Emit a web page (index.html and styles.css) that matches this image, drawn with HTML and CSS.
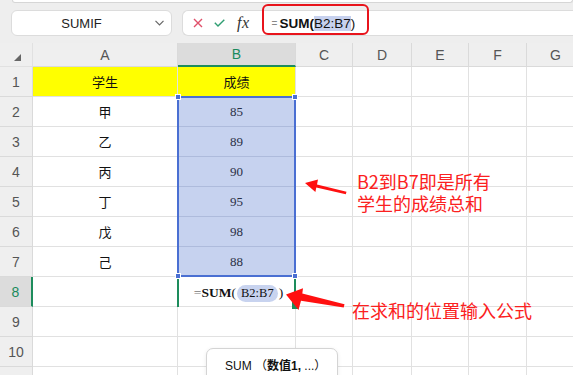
FILE: index.html
```html
<!DOCTYPE html>
<html lang="zh">
<head>
<meta charset="utf-8">
<link rel="stylesheet" href="styles.css">
</head>
<body>
<div class="page">
  <div class="toolbar">
    <div class="top-edge"></div>
    <div class="bar-row">
      <div class="namebox">
        <span class="name">SUMIF</span>
        <svg class="chev" width="9" height="6" viewBox="0 0 9 6"><polyline points="0.5,0.8 4.5,4.8 8.5,0.8" fill="none" stroke="#666" stroke-width="1.2"/></svg>
      </div>
      <div class="formulabar">
        <svg class="ico" width="10" height="10" viewBox="0 0 10 10"><path d="M1 1 L9 9 M9 1 L1 9" stroke="#e0506a" stroke-width="1.4" fill="none"/></svg>
        <svg class="ico ok" width="11" height="8" viewBox="0 0 11 8"><polyline points="0.8,3.8 4,7 10.3,0.7" stroke="#2f9e72" stroke-width="1.4" fill="none"/></svg>
        <span class="fx">fx</span>
        <div class="formula"><span class="eq">=</span><b>SUM(</b><span class="ref">B2:B7</span>)</div>
        <div class="redbox"></div>
      </div>
    </div>
  </div>

  <div class="sheet">
    <div class="corner"><svg width="8" height="8" viewBox="0 0 8 8"><polygon points="7,0 7,7 0,7" fill="#666"/></svg></div>
    <div class="ch">A</div><div class="ch ch-on">B</div><div class="ch">C</div><div class="ch">D</div><div class="ch">E</div><div class="ch">F</div><div class="ch">G</div>

    <div class="rh">1</div><div class="c hl">学生</div><div class="c hl">成绩</div><div class="c"></div><div class="c"></div><div class="c"></div><div class="c"></div><div class="c"></div>
    <div class="rh">2</div><div class="c">甲</div><div class="c sel">85</div><div class="c"></div><div class="c"></div><div class="c"></div><div class="c"></div><div class="c"></div>
    <div class="rh">3</div><div class="c">乙</div><div class="c sel">89</div><div class="c"></div><div class="c"></div><div class="c"></div><div class="c"></div><div class="c"></div>
    <div class="rh">4</div><div class="c">丙</div><div class="c sel">90</div><div class="c"></div><div class="c"></div><div class="c"></div><div class="c"></div><div class="c"></div>
    <div class="rh">5</div><div class="c">丁</div><div class="c sel">95</div><div class="c"></div><div class="c"></div><div class="c"></div><div class="c"></div><div class="c"></div>
    <div class="rh">6</div><div class="c">戊</div><div class="c sel">98</div><div class="c"></div><div class="c"></div><div class="c"></div><div class="c"></div><div class="c"></div>
    <div class="rh">7</div><div class="c">己</div><div class="c sel last">88</div><div class="c"></div><div class="c"></div><div class="c"></div><div class="c"></div><div class="c"></div>
    <div class="rh rh-on">8</div><div class="c"></div><div class="c active"><span class="f2"><span class="eq2">=</span><b>SUM</b>(<span class="pill">B2:B7</span>)</span><span class="fill-handle"></span></div><div class="c"></div><div class="c"></div><div class="c"></div><div class="c"></div><div class="c"></div>
    <div class="rh">9</div><div class="c"></div><div class="c"></div><div class="c"></div><div class="c"></div><div class="c"></div><div class="c"></div><div class="c"></div>
    <div class="rh">10</div><div class="c"></div><div class="c"></div><div class="c"></div><div class="c"></div><div class="c"></div><div class="c"></div><div class="c"></div>
    <div class="rh"></div><div class="c"></div><div class="c"></div><div class="c"></div><div class="c"></div><div class="c"></div><div class="c"></div><div class="c"></div>
  </div>

  <div class="selection">
    <span class="hd tl"></span><span class="hd tr"></span><span class="hd bl"></span><span class="hd br"></span>
  </div>

  <svg class="arrows" width="573" height="375" viewBox="0 0 573 375">
    <polygon points="305,183 318,179.5 317,184.5 346.5,191.8 345.8,194.2 316.3,187.6 315.4,192" fill="#ff1010"/>
    <polygon points="286,294.5 303,288.2 302.3,293.6 344.5,304.3 343.7,307.6 301,300.8 298.5,310" fill="#ff1010"/>
  </svg>

  <div class="note note1">B2到B7即是所有<br>学生的成绩总和</div>
  <div class="note note2">在求和的位置输入公式</div>

  <div class="tip">SUM （<b>数值1,</b> ...）</div>
</div>
</body>
</html>
```

FILE: styles.css
```css
html, body {
  margin: 0;
  background: #fff;
}

body {
  font-family: "Liberation Sans", "Noto Sans CJK SC", sans-serif;
  color: #1a1a1a;
}

.page {
  position: relative;
  width: 573px;
  height: 375px;
  overflow: hidden;
}

/* ---------- toolbar ---------- */
.toolbar {
  height: 43px;
  background: #eeeeee;
  box-sizing: border-box;
}

.top-edge {
  height: 2px;
  margin-left: 12px;
  background: #fff;
  border: 1px solid #d6d6d6;
  border-top: none;
  border-radius: 0 0 4px 4px;
}

.bar-row {
  display: flex;
  gap: 10px;
  padding: 7px 0 0 11px;
}

.namebox {
  width: 161px;
  height: 26px;
  box-sizing: border-box;
  background: #fff;
  border: 1px solid #dcdcdc;
  border-radius: 6px;
  display: flex;
  align-items: center;
  padding-right: 7px;
}

.name {
  flex: 1;
  text-align: center;
  font-size: 13px;
  color: #222;
  padding-right: 4px;
}

.chev {
  display: block;
}

.formulabar {
  position: relative;
  flex: 1;
  height: 26px;
  box-sizing: border-box;
  background: #fff;
  border: 1px solid #dcdcdc;
  border-right: none;
  border-radius: 6px 0 0 6px;
  display: flex;
  align-items: center;
  padding-left: 10px;
}

.ico {
  display: block;
}

.ok {
  margin-left: 11px;
}

.fx {
  margin-left: 12px;
  font-family: "Liberation Serif", serif;
  font-style: italic;
  font-size: 16px;
  color: #333;
  letter-spacing: 0.5px;
}

.formula {
  margin-left: 22px;
  font-size: 13.5px;
  color: #111;
  display: flex;
  align-items: center;
}

.formula .eq {
  font-size: 10px;
  color: #888;
  margin-right: 2px;
}

.formula b {
  font-weight: bold;
}

.ref {
  background: #c7d1ee;
  line-height: 15px;
}

.redbox {
  position: absolute;
  left: 79px;
  top: -7px;
  width: 107px;
  height: 31px;
  box-sizing: border-box;
  border: 2.5px solid #e8141c;
  border-radius: 6px;
}

/* ---------- sheet ---------- */
.sheet {
  display: grid;
  grid-template-columns: 33px 145px 118px 57px 59px 57px 58px 58px;
  grid-template-rows: 24px repeat(11, 30px);
}

.sheet > div {
  box-sizing: border-box;
  border-right: 1px solid #e1e1e1;
  border-bottom: 1px solid #e1e1e1;
  display: flex;
  align-items: center;
  justify-content: center;
}

.corner {
  background: #efefef;
  padding: 6px 0 0 4px;
}

.ch {
  background: #efefef;
  color: #555;
  font-size: 14px;
  border-color: #dadada !important;
}

.ch-on {
  background: #dcdcdc;
  color: #1a8a5c;
  border-bottom: 2px solid #1d8c5c !important;
}

.rh {
  background: #efefef;
  color: #555;
  font-size: 14px;
  border-color: #dadada !important;
}

.rh-on {
  background: #dcdcdc;
  color: #1a8a5c;
  border-right: 2px solid #1d8c5c !important;
}

.c {
  font-size: 13px;
  color: #111;
}

.hl {
  background: #ffff00;
}

.sel {
  background: #c6d2ef;
  border-bottom-color: #aebbdc !important;
  font-family: "Liberation Serif", serif;
  color: #2a2f45;
}

.active {
  position: relative;
}

.active::before,
.active::after {
  content: "";
  position: absolute;
  top: 0;
  width: 2px;
  background: #1d8c5c;
}

.active::before {
  left: -1px;
  bottom: -1px;
}

.active::after {
  right: -1px;
  bottom: 4px;
}

.fill-handle {
  position: absolute;
  right: -3px;
  bottom: -3px;
  width: 6px;
  height: 7px;
  background: #1d8c5c;
}

.f2 {
  font-family: "Liberation Serif", serif;
  font-size: 13.5px;
  color: #111;
  display: flex;
  align-items: center;
  margin-top: 3px;
  margin-left: 4px;
}

.eq2 {
  color: #777;
}

.pill {
  background: #c8d3ef;
  border-radius: 9px;
  padding: 0 4px;
  margin: 0 1px;
  font-size: 12.5px;
  line-height: 17px;
}

/* ---------- overlays ---------- */
.selection {
  position: absolute;
  left: 177px;
  top: 96px;
  width: 119px;
  height: 181px;
  box-sizing: border-box;
  border: 2px solid #4a6fd2;
}

.hd {
  position: absolute;
  width: 6px;
  height: 6px;
  box-sizing: border-box;
  background: #4a6fd2;
  border: 1px solid #fff;
}

.tl { left: -4px; top: -4px; }
.tr { right: -4px; top: -4px; }
.bl { left: -4px; bottom: -4px; }
.br { right: -4px; bottom: -4px; }

.arrows {
  position: absolute;
  left: 0;
  top: 0;
}

.note {
  position: absolute;
  color: #fb2020;
  font-family: "Noto Sans CJK SC", sans-serif;
  font-size: 18px;
  line-height: 22px;
}

.note1 {
  left: 357px;
  top: 170px;
}

.note2 {
  left: 352px;
  top: 299px;
}

.tip {
  position: absolute;
  left: 206px;
  top: 348px;
  width: 132px;
  height: 40px;
  box-sizing: border-box;
  background: #fff;
  border: 1px solid #d4d4d4;
  border-radius: 7px;
  box-shadow: 0 1px 4px rgba(0, 0, 0, 0.08);
  padding: 8px 0 0 18px;
  font-family: "Liberation Sans", "Noto Sans CJK SC", sans-serif;
  font-size: 12px;
  line-height: 18px;
  color: #111;
  white-space: nowrap;
}

.tip b {
  font-weight: bold;
}
```
